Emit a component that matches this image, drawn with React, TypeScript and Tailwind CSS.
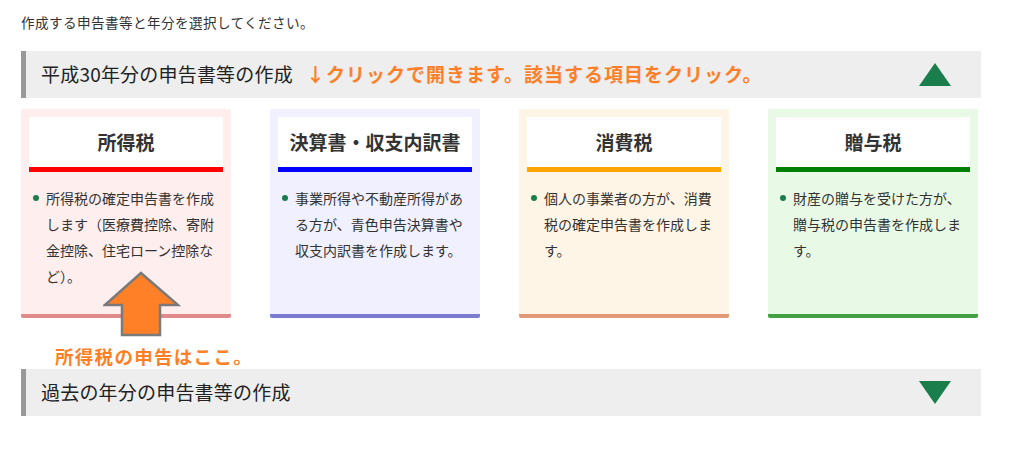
const FONT = { fontFamily: '"Noto Sans CJK JP", "Noto Sans", sans-serif' };

const CARDS = [
  {
    title: '所得税',
    text: '所得税の確定申告書を作成します（医療費控除、寄附金控除、住宅ローン控除など）。',
    bg: 'bg-[#ffeeee]',
    bar: 'bg-[#ff0000]',
    bottom: 'border-[#e08a8a]',
  },
  {
    title: '決算書・収支内訳書',
    text: '事業所得や不動産所得がある方が、青色申告決算書や収支内訳書を作成します。',
    bg: 'bg-[#f0f0ff]',
    bar: 'bg-[#0000ff]',
    bottom: 'border-[#7b7bcf]',
  },
  {
    title: '消費税',
    text: '個人の事業者の方が、消費税の確定申告書を作成します。',
    bg: 'bg-[#fff5e6]',
    bar: 'bg-[#ffa500]',
    bottom: 'border-[#e09a78]',
  },
  {
    title: '贈与税',
    text: '財産の贈与を受けた方が、贈与税の申告書を作成します。',
    bg: 'bg-[#e8fae6]',
    bar: 'bg-[#008000]',
    bottom: 'border-[#43a043]',
  },
];

function Triangle({ up }: { up: boolean }) {
  return (
    <svg width="32" height="23" viewBox="0 0 32 23" className="block">
      <polygon points={up ? '16,0 32,23 0,23' : '0,0 32,0 16,23'} fill="#1a7d4c" />
    </svg>
  );
}

function SectionHeader({ title, up, children }: { title: string; up: boolean; children?: React.ReactNode }) {
  return (
    <div className="flex items-center h-[47px] bg-[#eeeeee] border-l-[5px] border-[#999999] pl-[15px] pr-[30px]">
      <span className="text-[19px] text-[#222222] whitespace-nowrap tracking-[0.2px]">{title}</span>
      {children}
      <div className="ml-auto">
        <Triangle up={up} />
      </div>
    </div>
  );
}

export default function App() {
  return (
    <div className="relative w-[1016px] h-[454px] bg-white text-[#333333]" style={FONT}>
      <div className="w-[960px] ml-[21px] pt-[11px]">
        <p className="text-[13.6px] leading-[22px] tracking-[0.4px]">作成する申告書等と年分を選択してください。</p>

        <div className="mt-[18px]">
          <SectionHeader title="平成30年分の申告書等の作成" up>
            <span className="ml-[13px] text-[19px] font-bold text-[#ff7f27] whitespace-nowrap tracking-[1px]">
              ↓クリックで開きます。該当する項目をクリック。
            </span>
          </SectionHeader>
        </div>

        <div className="mt-[11px] flex gap-[39px]">
          {CARDS.map((c) => (
            <div
              key={c.title}
              className={`w-[210px] h-[209px] rounded-[2px] border-b-4 px-2 pt-2 ${c.bg} ${c.bottom}`}
            >
              <div className="h-[50px] bg-white flex items-center justify-center">
                <span className="text-[19px] font-bold text-[#333333] whitespace-nowrap">{c.title}</span>
              </div>
              <div className={`h-[5px] ${c.bar}`} />
              <div className="flex mt-[13px] pl-[4px] pr-[4px]">
                <span className="mt-[10px] w-[6px] h-[6px] rounded-full bg-[#1a7d4c] shrink-0" />
                <p className="ml-[7px] w-[172px] text-[14px] leading-[26px] text-[#333333]">{c.text}</p>
              </div>
            </div>
          ))}
        </div>

        <p className="mt-[26px] h-[25px] leading-[25px] pl-[34px] text-[18.5px] font-bold text-[#ff7f27] tracking-[1.3px]">
          所得税の申告はここ。
        </p>

        <SectionHeader title="過去の年分の申告書等の作成" up={false} />
      </div>

      {/* arrow pointing at the income tax card */}
      <svg
        className="absolute left-[103px] top-[271px]"
        width="78"
        height="66"
        viewBox="0 0 78 66"
      >
        <polygon
          points="38,2 75,34 57,34 57,64 19,64 19,34 2,34"
          fill="#ff8026"
          stroke="#7a7a7a"
          strokeWidth="2.5"
          strokeLinejoin="miter"
        />
      </svg>
    </div>
  );
}
